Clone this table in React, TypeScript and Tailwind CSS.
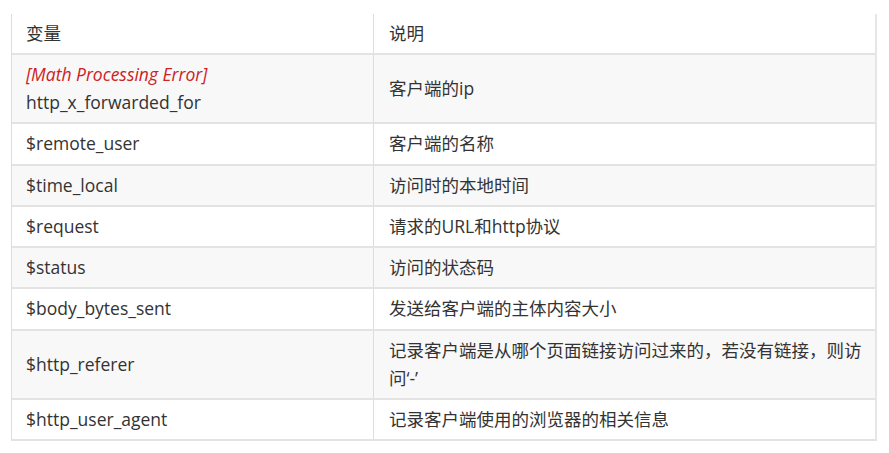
import React from "react";

const rows: { v: React.ReactNode; d: string; two?: boolean }[] = [
  {
    v: (
      <>
        <span className="block italic text-[#cc2222]">[Math Processing Error]</span>
        <span className="block">http_x_forwarded_for</span>
      </>
    ),
    d: "客户端的ip",
    two: true,
  },
  { v: "$remote_user", d: "客户端的名称" },
  { v: "$time_local", d: "访问时的本地时间" },
  { v: "$request", d: "请求的URL和http协议" },
  { v: "$status", d: "访问的状态码" },
  { v: "$body_bytes_sent", d: "发送给客户端的主体内容大小" },
  {
    v: "$http_referer",
    d: "记录客户端是从哪个页面链接访问过来的，若没有链接，则访问‘-’",
    two: true,
  },
  { v: "$http_user_agent", d: "记录客户端使用的浏览器的相关信息" },
];

export default function App() {
  return (
    <div
      className="w-[889px] h-[453px] bg-white pt-[14px] pl-[11px] text-[17.5px] leading-[28px] text-[#333333]"
      style={{ fontFamily: '"Open Sans", "Noto Sans CJK SC", sans-serif' }}
    >
      <div className="w-[866px] border-l border-r-2 border-l-[#dddddd] border-r-[#e6e6e6] border-b-2 border-b-[#e3e3e3]">
        <div className="flex bg-white">
          <div className="w-[362px] shrink-0 pl-[14px] pt-[5px] pb-[6px] border-r border-[#dddddd]">变量</div>
          <div className="flex-1 pl-[15px] pt-[5px] pb-[6px]">说明</div>
        </div>
        {rows.map((r, i) => (
          <div
            key={i}
            className={`flex border-t-2 border-[#e3e3e3] ${i % 2 === 0 ? "bg-[#f8f8f8]" : "bg-white"}`}
          >
            <div className="w-[362px] shrink-0 pl-[14px] pt-[5px] pb-[6.25px] border-r border-[#dddddd] flex flex-col justify-center">
              {r.v}
            </div>
            <div className="flex-1 pl-[15px] pr-[10px] pt-[5px] pb-[6.25px] flex items-center">
              <span>{r.d}</span>
            </div>
          </div>
        ))}
      </div>
    </div>
  );
}
